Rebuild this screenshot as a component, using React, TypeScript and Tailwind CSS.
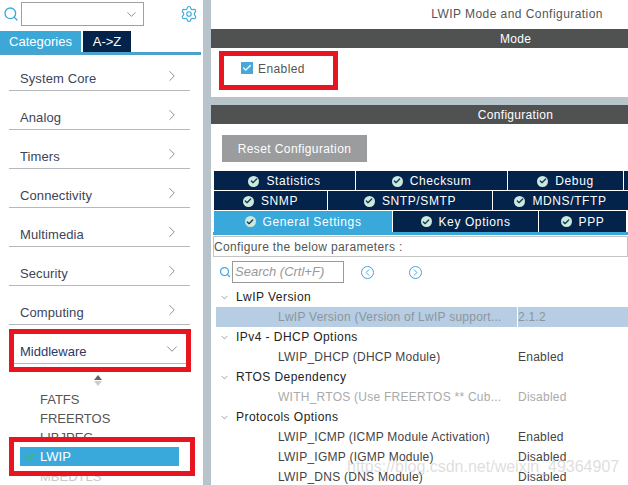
import { ChevronDown, ChevronRight, ChevronLeft, Search, Settings, Check } from "lucide-react";

const categories = ["System Core", "Analog", "Timers", "Connectivity", "Multimedia", "Security", "Computing"];

const tabRows = [
  [
    { label: "Statistics", w: "w-[141px]" },
    { label: "Checksum", w: "w-[151px]" },
    { label: "Debug", w: "w-[115px]" },
    { label: "", w: "flex-1" },
  ],
  [
    { label: "SNMP", w: "w-[113px]" },
    { label: "SNTP/SMTP", w: "w-[164px]" },
    { label: "MDNS/TFTP", w: "flex-1" },
  ],
  [
    { label: "General Settings", w: "w-[178px]", active: true },
    { label: "Key Options", w: "w-[145px]" },
    { label: "PPP", w: "w-[87px]" },
    { label: "", w: "flex-1" },
  ],
];

const tree = [
  {
    title: "LwIP Version",
    rows: [{ name: "LwIP Version (Version of LwIP support...", value: "2.1.2", selected: true }],
  },
  {
    title: "IPv4 - DHCP Options",
    rows: [{ name: "LWIP_DHCP (DHCP Module)", value: "Enabled" }],
  },
  {
    title: "RTOS Dependency",
    rows: [{ name: "WITH_RTOS (Use FREERTOS ** Cub...", value: "Disabled", muted: true }],
  },
  {
    title: "Protocols Options",
    rows: [
      { name: "LWIP_ICMP (ICMP Module Activation)", value: "Enabled" },
      { name: "LWIP_IGMP (IGMP Module)", value: "Disabled" },
      { name: "LWIP_DNS (DNS Module)", value: "Disabled" },
    ],
  },
];

const TabCheck = () => (
  <span className="flex h-[11px] w-[11px] items-center justify-center rounded-full bg-[#cfe8dc]">
    <Check className="h-[8px] w-[8px] text-[#0b3a5c]" strokeWidth={4} />
  </span>
);

const Sidebar = () => (
  <div className="relative h-[485px] w-[203px] shrink-0 overflow-hidden bg-white">
    <div className="flex h-[31px] items-start pt-[2px]">
      <Search className="ml-[3px] mt-[4px] h-[16px] w-[16px] text-[#39a9dc]" strokeWidth={2} />
      <div className="ml-[2px] flex h-[24px] w-[123px] items-center justify-end border border-[#a0a0a0] pr-[4px]">
        <ChevronDown className="h-[15px] w-[15px] text-[#777]" strokeWidth={1.3} />
      </div>
      <Settings className="ml-[36px] mt-[3px] h-[18px] w-[18px] text-[#39a9dc]" strokeWidth={1.5} />
    </div>
    <div className="flex h-[21px] w-[201px] text-[13px] text-white">
      <div className="flex w-[81px] items-center justify-center bg-[#3ba8d8]">Categories</div>
      <div className="ml-[2px] flex w-[48px] items-center justify-center bg-[#03234b]">A-&gt;Z</div>
    </div>
    <div className="h-[3px] w-[201px] bg-[#4ba3cc]" />
    <div className="-mt-[3px]">
      {categories.map((c) => (
        <div key={c} className="mx-[9px] flex h-[39px] w-[181px] items-end justify-between border-b border-[#b5b9bd] pb-[2px] pl-[11px] pr-[9px] text-[13px] tracking-[0.1px] text-[#3d4458]">
          <span>{c}</span>
          <ChevronRight className="mb-[3px] h-[18px] w-[18px] text-[#777]" strokeWidth={1.1} />
        </div>
      ))}
      <div className="ml-[14px] mt-[2px] flex h-[37px] w-[172px] items-end justify-between border-b border-[#b5b9bd] pb-[2px] pl-[6px] pr-[5px] text-[13px] text-[#2c3a6b]">
        <span>Middleware</span>
        <ChevronDown className="mb-[3px] h-[18px] w-[18px] text-[#777]" strokeWidth={1.1} />
      </div>
    </div>
    <div className="mx-auto mt-[11px] flex w-[8px] -translate-x-[4px] flex-col items-center gap-[1px]">
      <div className="h-0 w-0 border-x-[4px] border-b-[5px] border-x-transparent border-b-[#666]" />
      <div className="h-0 w-0 border-x-[4px] border-t-[5px] border-x-transparent border-t-[#ccc]" />
    </div>
    <div className="pl-[40px] pt-[4px] text-[13px] leading-[19px] text-[#555]">
      <div>FATFS</div>
      <div>FREERTOS</div>
      <div className="h-[14px] overflow-hidden">LIBJPEG</div>
    </div>
    <div className="relative ml-[20px] mt-[5px] flex h-[19px] w-[159px] items-center bg-[#39a9dc] pl-[20px] text-[13px] text-white">
      <Check className="absolute left-[4px] h-[12px] w-[12px] text-[#3eb489]" strokeWidth={4} />
      LWIP
    </div>
    <div className="pl-[40px] pt-[1px] text-[13px] leading-[19px] text-[#c8c8c8]">MBEDTLS</div>

    <div className="absolute left-[9px] top-[329px] h-[43px] w-[182px] border-[5px] border-[#e8141f]" />
    <div className="absolute left-[9px] top-[437px] h-[39px] w-[186px] border-[5px] border-[#e8141f]" />
  </div>
);

const ConfigPanel = () => (
  <div className="relative h-[485px] min-w-0 flex-1 overflow-hidden bg-white">
    <div className="h-[29px] pr-[25px] pt-[7px] text-right text-[12px] leading-[15px] tracking-[0.45px] text-[#555]">
      LWIP Mode and Configuration
    </div>
    <div className="flex h-[19px] items-center justify-center bg-[#505252] pl-[192px] text-[12px] tracking-[0.3px] text-white">Mode</div>
    <div className="flex h-[49px] items-start pl-[30px] pt-[14px] text-[12px] tracking-[0.4px] text-[#555]">
      <span className="flex h-[12px] w-[12px] items-center justify-center bg-[#4aa8d8]">
        <Check className="h-[10px] w-[10px] text-white" strokeWidth={3} />
      </span>
      <span className="ml-[5px] pt-[1px] leading-[12px]">Enabled</span>
    </div>
    <div className="h-[8px] bg-[#b8c4cc]" />
    <div className="flex h-[19px] items-center justify-center bg-[#505252] pl-[192px] text-[12px] tracking-[0.3px] text-white">Configuration</div>
    <div className="pl-[11px] pt-[11px]">
      <div className="flex h-[27px] w-[145px] items-center justify-center bg-[#9a9c9e] text-[12px] tracking-[0.4px] text-white">Reset Configuration</div>
    </div>
    <div className="ml-[3px] mt-[9px] flex flex-col gap-[1px]">
      {tabRows.map((row, i) => (
        <div key={i} className={`flex gap-[1px] ${i === 2 ? "h-[21px]" : "h-[19px]"}`}>
          {row.map((tab, j) => (
            <div
              key={j}
              className={`flex items-center justify-center gap-[7px] text-[12px] tracking-[0.6px] text-white ${i < 2 ? "pt-[1px]" : ""} ${tab.w} ${
                "active" in tab && tab.active ? "bg-[#39a9dc]" : tab.label || i !== 2 ? "bg-[#03234b]" : "bg-white"
              }`}
            >
              {tab.label && <TabCheck />}
              {tab.label}
            </div>
          ))}
        </div>
      ))}
    </div>
    <div className="ml-[2px] h-[3px] bg-[#3ba8d8]" />
    <div className="ml-[2px] mt-[1px] flex h-[21px] items-center border border-[#c4c4c4] text-[12px] tracking-[0.35px] text-[#555]">
      Configure the below parameters :
    </div>
    <div className="mt-[4px] flex h-[22px] items-center">
      <Search className="ml-[8px] h-[12px] w-[12px] text-[#39a9dc]" strokeWidth={2.5} />
      <div className="ml-[1px] flex h-[22px] w-[112px] items-center border border-[#999] pl-[2px] text-[13px] italic text-[#999]">Search (Crtl+F)</div>
      <ChevronLeft className="ml-[17px] h-[13px] w-[13px] rounded-full border border-[#39a9dc] text-[#39a9dc]" strokeWidth={2} />
      <ChevronRight className="ml-[35px] h-[13px] w-[13px] rounded-full border border-[#39a9dc] text-[#39a9dc]" strokeWidth={2} />
    </div>
    <div className="pt-[4px] text-[12px] leading-[20px] tracking-[0.25px]">
      {tree.map((group) => (
        <div key={group.title}>
          <div className="flex h-[20px] items-center tracking-[0.45px] text-[#222]">
            <ChevronDown className="ml-[8px] h-[11px] w-[11px] text-[#666]" strokeWidth={1.3} />
            <span className="ml-[6px]">{group.title}</span>
          </div>
          {group.rows.map((row) => {
            const tone = row.selected ? "text-[#8d959d]" : row.muted ? "text-[#aaa]" : "text-[#444]";
            return (
              <div key={row.name} className={`ml-[5px] flex h-[20px] items-center ${row.selected ? "bg-[#b6cde3]" : ""} ${tone}`}>
                <span className="w-[301px] shrink-0 overflow-hidden whitespace-nowrap pl-[62px]">{row.name}</span>
                <span className={row.selected ? "border-l border-white" : "ml-[1px]"}>{row.value}</span>
              </div>
            );
          })}
        </div>
      ))}
    </div>

    <div className="absolute left-[8px] top-[51px] h-[39px] w-[119px] border-[5px] border-[#e8141f]" />
    <div className="absolute left-[136px] top-[459px] whitespace-nowrap text-[16px] leading-[16px] text-[#c8c8c8]/60">https://blog.csdn.net/weixin_49364907</div>
  </div>
);

export default function App() {
  return (
    <div className="flex h-[485px] w-[628px] overflow-hidden font-['Liberation_Sans',Arial,sans-serif]">
      <Sidebar />
      <div className="h-[485px] w-[8px] shrink-0 bg-[#b8c4cc]" />
      <ConfigPanel />
    </div>
  );
}
